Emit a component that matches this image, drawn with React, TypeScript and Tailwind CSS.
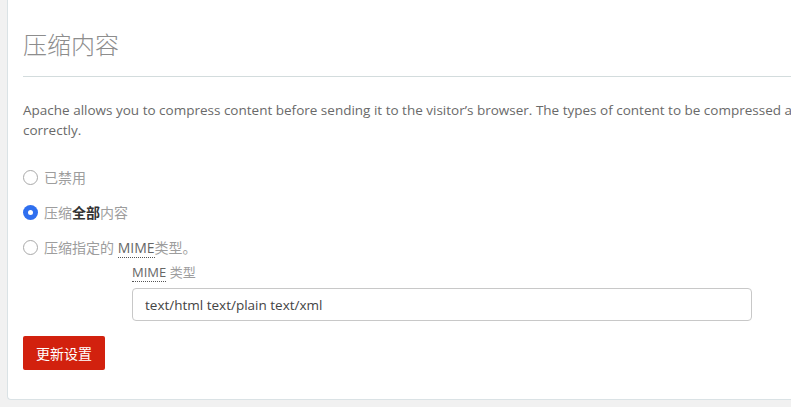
const cjk = "font-['Open_Sans','Noto_Sans_CJK_SC',sans-serif]";

const Radio = ({ checked }: { checked?: boolean }) =>
  checked ? (
    <span className="flex h-[15px] w-[15px] items-center justify-center rounded-full bg-[#2f6fef]">
      <span className="h-[5px] w-[5px] rounded-full bg-white" />
    </span>
  ) : (
    <span className="h-[15px] w-[15px] rounded-full border border-[#a9a9a9] bg-white" />
  );

const Mime = () => (
  <abbr className="no-underline border-b border-dotted border-[#555] text-[#666]" title="Multipurpose Internet Mail Extensions">
    MIME
  </abbr>
);

export default function App() {
  return (
    <div className={`h-[407px] w-[791px] overflow-hidden bg-[#f1f1f1] pl-[7px] ${cjk}`}>
      <div className="h-[400px] w-[1000px] rounded-bl-[4px] border-b border-l border-[#dae2e5] bg-white px-[15px]">
        <h1 className="border-b border-[#d3dcdd] pt-[27px] pb-[13px] text-[24px] leading-[36px] font-light text-[#8d8d8d]">
          压缩内容
        </h1>

        <p className="mt-[23px] whitespace-nowrap text-[13.5px] leading-[20px] text-[#6a6a6a]">
          Apache allows you to compress content before sending it to the visitor’s browser. The types of content to be compressed are set by MIME type and must be configured
          <br />
          correctly.
        </p>

        <div className="mt-[20px] text-[14px] text-[#9d9d9d]">
          <label className="flex h-[35px] items-center gap-[6px]">
            <Radio />
            <span>已禁用</span>
          </label>
          <label className="flex h-[35px] items-center gap-[6px]">
            <Radio checked />
            <span>
              压缩<b className="font-bold text-[#333]">全部</b>内容
            </span>
          </label>
          <label className="flex h-[35px] items-center gap-[6px]">
            <Radio />
            <span>
              压缩指定的 <Mime />类型。
            </span>
          </label>
        </div>

        <div className="pl-[109px]">
          <div className="text-[13px] leading-[14px] text-[#9d9d9d]">
            <Mime /> 类型
          </div>
          <input
            className="mt-[9px] h-[33px] w-[620px] rounded-[4px] border border-[#c8c8c8] px-[12px] text-[13.5px] text-[#444] outline-none"
            defaultValue="text/html text/plain text/xml"
          />
        </div>

        <button className="mt-[15px] h-[34px] w-[82px] rounded-[2px] bg-[#d2210e] text-[14px] text-white">
          更新设置
        </button>
      </div>
    </div>
  );
}
